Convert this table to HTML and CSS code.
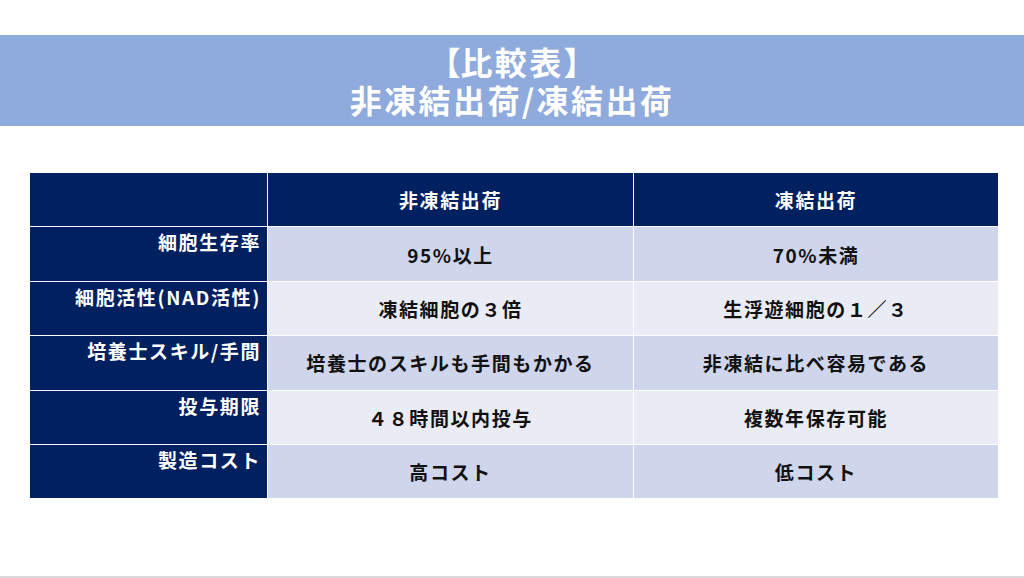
FILE: index.html
```html
<!DOCTYPE html>
<html lang="ja">
<head>
<meta charset="utf-8">
<link rel="stylesheet" href="styles.css">
</head>
<body>
<div class="page">
  <header class="banner">
    <div class="line1"><span class="br">【</span>比較表<span class="br">】</span></div>
    <div class="line2">非凍結出荷/凍結出荷</div>
  </header>
  <table class="cmp">
    <colgroup>
      <col class="c1"><col class="c2"><col class="c3">
    </colgroup>
    <thead>
      <tr><th class="corner"></th><th>非凍結出荷</th><th>凍結出荷</th></tr>
    </thead>
    <tbody>
      <tr class="odd"><th class="rh">細胞生存率</th><td>95%以上</td><td>70%未満</td></tr>
      <tr class="even"><th class="rh">細胞活性(NAD活性)</th><td>凍結細胞の３倍</td><td>生浮遊細胞の１／３</td></tr>
      <tr class="odd"><th class="rh">培養士スキル/手間</th><td>培養士のスキルも手間もかかる</td><td>非凍結に比べ容易である</td></tr>
      <tr class="even"><th class="rh">投与期限</th><td>４８時間以内投与</td><td>複数年保存可能</td></tr>
      <tr class="odd"><th class="rh">製造コスト</th><td>高コスト</td><td>低コスト</td></tr>
    </tbody>
  </table>
  <div class="spacer"></div>
  <div class="footline"></div>
</div>
</body>
</html>
```

FILE: styles.css
```css
html, body {
  margin: 0;
  padding: 0;
  background: #ffffff;
}
.page {
  width: 1024px;
  height: 578px;
  display: flex;
  flex-direction: column;
  font-family: "Noto Sans CJK JP", "Noto Sans", sans-serif;
  font-weight: 700;
}
.banner {
  margin-top: 35px;
  height: 91px;
  box-sizing: border-box;
  padding-top: 7px;
  background: #8faadc;
  color: #ffffff;
  text-align: center;
  font-size: 32px;
  line-height: 38px;
  letter-spacing: 2.4px;
}
.br {
  font-feature-settings: "halt";
  letter-spacing: 0;
}
.cmp {
  margin-top: 46px;
  margin-left: 29px;
  width: 969px;
  table-layout: fixed;
  border-collapse: collapse;
  font-size: 19px;
  letter-spacing: 1.6px;
}
.c1 { width: 238px; }
.c2 { width: 366px; }
.c3 { width: 365px; }
.cmp th, .cmp td {
  border: 1px solid #ffffff;
  height: 54.4px;
  padding: 0;
  box-sizing: border-box;
  white-space: nowrap;
}
.cmp thead th {
  background: #002060;
  color: #ffffff;
  text-align: center;
  vertical-align: middle;
}
.cmp th.rh {
  background: #002060;
  color: #ffffff;
  text-align: right;
  vertical-align: top;
  padding: 1px 6px 0 0;
}
.cmp td {
  color: #111111;
  text-align: center;
  vertical-align: middle;
}
.odd td { background: #cfd5ea; }
.even td { background: #e9ebf5; }
.spacer { flex: 1; }
.footline {
  height: 2px;
  background: #d9d9d9;
}
```
